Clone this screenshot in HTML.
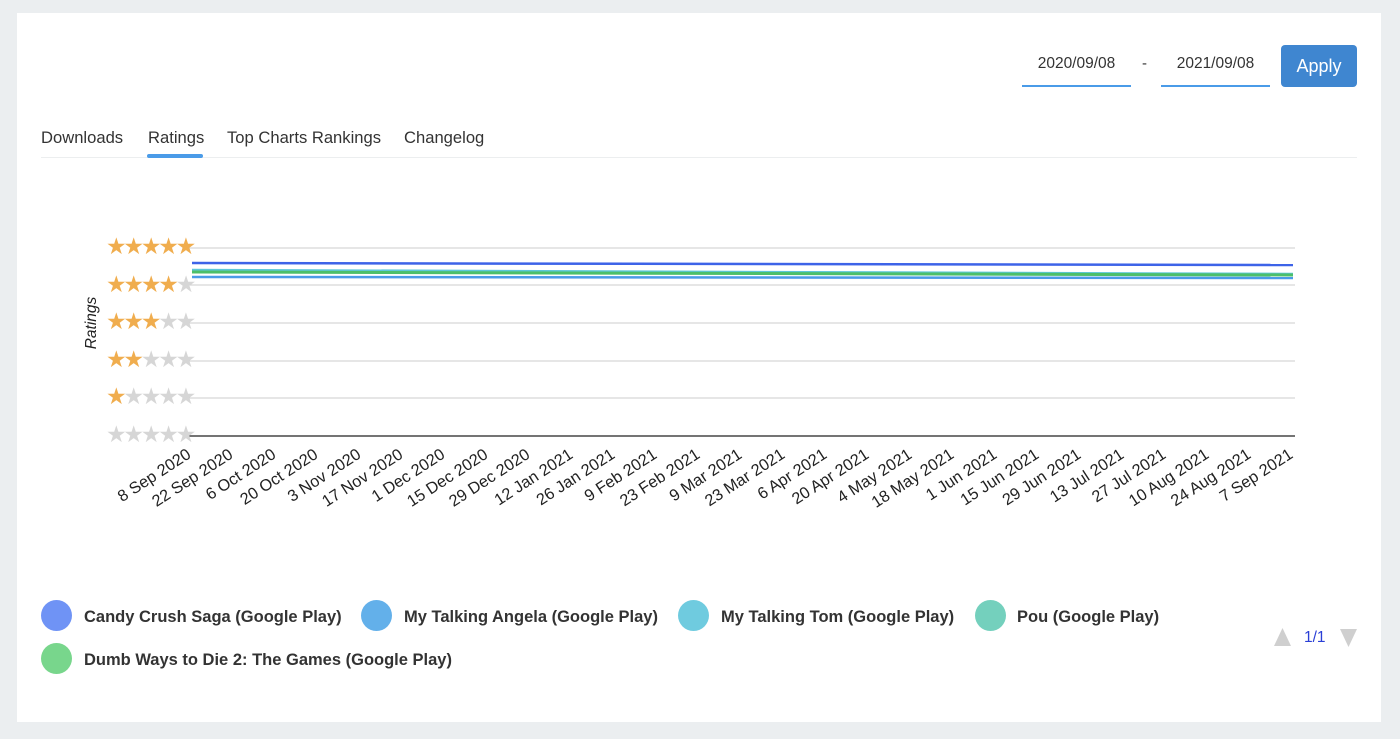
<!DOCTYPE html>
<html><head><meta charset="utf-8"><style>
*{margin:0;padding:0;box-sizing:border-box}
body{width:1400px;height:739px;background:#ebeef0;font-family:"Liberation Sans",Arial,sans-serif;position:relative;overflow:hidden}
.card{position:absolute;left:17px;top:13px;width:1364px;height:709px;background:#fff}
.a{position:absolute}
.date{position:absolute;top:45px;height:42px;width:109px;border-bottom:2px solid #4a9be8;font-size:15.5px;color:#333;text-align:center;line-height:38px}
.btn{position:absolute;left:1281px;top:45px;width:76px;height:42px;background:#3f86d0;border-radius:4px;color:#fff;font-size:18px;text-align:center;line-height:42px}
.tab{position:absolute;top:128px;font-size:16.6px;color:#333}
.leg{position:absolute;font-size:16.5px;font-weight:bold;color:#333;line-height:20px}
.dot{position:absolute;width:31px;height:31px;border-radius:50%}
</style></head><body>
<div class="card"></div>
<div class="date" style="left:1022px">2020/09/08</div>
<div class="a" style="left:1142px;top:55px;font-size:15px;color:#333">-</div>
<div class="date" style="left:1161px">2021/09/08</div>
<div class="btn">Apply</div>
<div class="tab" style="left:41px">Downloads</div>
<div class="tab" style="left:148px">Ratings</div>
<div class="tab" style="left:227px">Top Charts Rankings</div>
<div class="tab" style="left:404px">Changelog</div>
<div class="a" style="left:41px;top:157px;width:1316px;height:1px;background:#eceeef"></div>
<div class="a" style="left:147px;top:154px;width:56px;height:4px;background:#4a9be8;border-radius:2px"></div>
<svg class="a" style="left:0;top:0" width="1400" height="560" font-family="Liberation Sans, Arial, sans-serif">
<g stroke="#ccc" stroke-width="1">
<line x1="189" y1="248" x2="1295" y2="248"/><line x1="189" y1="285" x2="1295" y2="285"/>
<line x1="189" y1="323" x2="1295" y2="323"/><line x1="189" y1="361" x2="1295" y2="361"/>
<line x1="189" y1="398" x2="1295" y2="398"/></g>
<line x1="189" y1="436" x2="1295" y2="436" stroke="#222" stroke-width="1.3"/>
<line x1="192" y1="263" x2="1293" y2="265" stroke="#3d63e8" stroke-width="2.5"/>
<line x1="192" y1="277" x2="1293" y2="278" stroke="#4a9be8" stroke-width="2.5"/>
<line x1="192" y1="270" x2="1293" y2="274" stroke="#5cc7d8" stroke-width="2.5"/>
<line x1="192" y1="272" x2="1293" y2="275" stroke="#4cbf6a" stroke-width="3"/>
<g font-size="23" letter-spacing="-3.2">
<text x="106" y="254" fill="#f0ad4e">★★★★★</text>
<text x="106" y="292" fill="#f0ad4e">★★★★<tspan fill="#d6d6d6">★</tspan></text>
<text x="106" y="329" fill="#f0ad4e">★★★<tspan fill="#d6d6d6">★★</tspan></text>
<text x="106" y="367" fill="#f0ad4e">★★<tspan fill="#d6d6d6">★★★</tspan></text>
<text x="106" y="404" fill="#f0ad4e">★<tspan fill="#d6d6d6">★★★★</tspan></text>
<text x="106" y="442" fill="#d6d6d6">★★★★★</text>
</g>
<text transform="translate(96,323) rotate(-90)" text-anchor="middle" font-size="15.5" font-style="italic" fill="#222">Ratings</text>
<g font-size="16.3" fill="#222" text-anchor="end">
<text transform="translate(192,457) rotate(-33)">8 Sep 2020</text>
<text transform="translate(234,457) rotate(-33)">22 Sep 2020</text>
<text transform="translate(277,457) rotate(-33)">6 Oct 2020</text>
<text transform="translate(319,457) rotate(-33)">20 Oct 2020</text>
<text transform="translate(362,457) rotate(-33)">3 Nov 2020</text>
<text transform="translate(404,457) rotate(-33)">17 Nov 2020</text>
<text transform="translate(446,457) rotate(-33)">1 Dec 2020</text>
<text transform="translate(489,457) rotate(-33)">15 Dec 2020</text>
<text transform="translate(531,457) rotate(-33)">29 Dec 2020</text>
<text transform="translate(574,457) rotate(-33)">12 Jan 2021</text>
<text transform="translate(616,457) rotate(-33)">26 Jan 2021</text>
<text transform="translate(658,457) rotate(-33)">9 Feb 2021</text>
<text transform="translate(701,457) rotate(-33)">23 Feb 2021</text>
<text transform="translate(743,457) rotate(-33)">9 Mar 2021</text>
<text transform="translate(786,457) rotate(-33)">23 Mar 2021</text>
<text transform="translate(828,457) rotate(-33)">6 Apr 2021</text>
<text transform="translate(870,457) rotate(-33)">20 Apr 2021</text>
<text transform="translate(913,457) rotate(-33)">4 May 2021</text>
<text transform="translate(955,457) rotate(-33)">18 May 2021</text>
<text transform="translate(998,457) rotate(-33)">1 Jun 2021</text>
<text transform="translate(1040,457) rotate(-33)">15 Jun 2021</text>
<text transform="translate(1082,457) rotate(-33)">29 Jun 2021</text>
<text transform="translate(1125,457) rotate(-33)">13 Jul 2021</text>
<text transform="translate(1167,457) rotate(-33)">27 Jul 2021</text>
<text transform="translate(1210,457) rotate(-33)">10 Aug 2021</text>
<text transform="translate(1252,457) rotate(-33)">24 Aug 2021</text>
<text transform="translate(1294,457) rotate(-33)">7 Sep 2021</text>
</g>
</svg>
<div class="dot" style="left:41px;top:600px;background:#6f93f5"></div>
<div class="leg" style="left:84px;top:607px">Candy Crush Saga (Google Play)</div>
<div class="dot" style="left:361px;top:600px;background:#63b0ea"></div>
<div class="leg" style="left:404px;top:607px">My Talking Angela (Google Play)</div>
<div class="dot" style="left:678px;top:600px;background:#6fcbdf"></div>
<div class="leg" style="left:721px;top:607px">My Talking Tom (Google Play)</div>
<div class="dot" style="left:975px;top:600px;background:#74d0bd"></div>
<div class="leg" style="left:1017px;top:607px">Pou (Google Play)</div>
<div class="dot" style="left:41px;top:643px;background:#78d68c"></div>
<div class="leg" style="left:84px;top:650px">Dumb Ways to Die 2: The Games (Google Play)</div>
<svg class="a" style="left:1272px;top:627px" width="90" height="22">
<polygon points="2,19 19,19 10.5,1" fill="#cfcfcf"/>
<polygon points="68,2 85,2 76.5,20" fill="#cfcfcf"/>
</svg>
<div class="a" style="left:1304px;top:629px;font-size:15.5px;color:#2a3fd6">1/1</div>
</body></html>
